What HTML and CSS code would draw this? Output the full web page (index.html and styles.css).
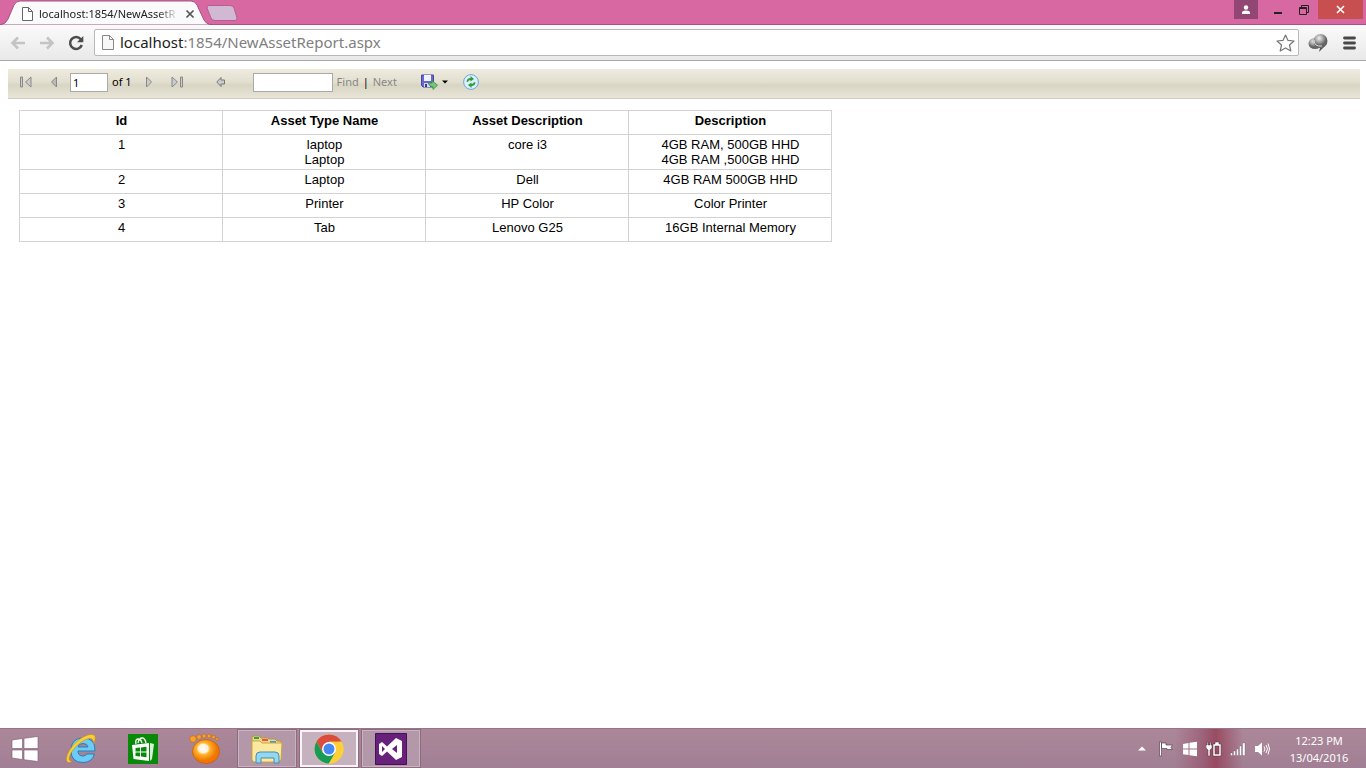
FILE: index.html
```html
<!DOCTYPE html>
<html lang="en">
<head>
<meta charset="utf-8">
<title>localhost:1854/NewAssetReport.aspx</title>
<link rel="stylesheet" href="styles.css">
</head>
<body>
<header class="titlebar">
  <div class="tab">
    <svg class="tab-shape" width="216" height="25" viewBox="0 0 216 25"><path d="M0 25 Q6 24 8 19 L14 5 Q16 1 20 1 H191 Q195 1 197 5 L204 20 Q206 24 211 25Z" fill="#fafafa" stroke="#a75283"/></svg>
    <svg class="tab-page" width="11" height="14" viewBox="0 0 11 14"><path d="M.5.5H6.500L10.500 4.500V13.500H.5ZM6.500.5V4.500H10.500" fill="#fff" stroke="#666"/></svg>
    <span class="tab-title">localhost:1854/NewAssetR</span>
    <button class="plain tab-close" aria-label="Close tab"><svg width="10" height="10" viewBox="0 0 10 10"><path d="M1.500 1.500L8.500 8.500M8.500 1.500L1.500 8.500" stroke="#555" stroke-width="1.700"/></svg></button>
  </div>
  <button class="plain new-tab" aria-label="New tab"><svg width="32" height="16" viewBox="0 0 32 16"><path d="M3 .5H24Q27 .5 28 3L31 13Q31 15.500 29 15.500H9Q6 15.500 5 13L1 3Q1 .5 3 .5Z" fill="#d2b9d3" stroke="#b45f92"/></svg></button>
  <div class="window-controls">
    <button class="plain user" aria-label="User"><svg width="10" height="10" viewBox="0 0 10 10"><circle cx="5" cy="2.500" r="2.200" fill="#fff"/><path d="M1 9V7.500Q1 5.500 5 5.500T9 7.500V9Z" fill="#fff"/></svg></button>
    <button class="plain minimize" aria-label="Minimize"><svg width="8" height="12" viewBox="0 0 8 12"><path d="M0 9H8" stroke="#222" stroke-width="2"/></svg></button>
    <button class="plain restore" aria-label="Restore"><svg width="10" height="10" viewBox="0 0 10 10"><path d="M2.500 2V.5H9.500V7.500H8M.5 2.500H7.500V9.500H.5ZM.5 3.500H7.500" fill="none" stroke="#222"/></svg></button>
    <button class="plain close" aria-label="Close"><svg width="9" height="9" viewBox="0 0 9 9"><path d="M1 1L8 8M8 1L1 8" stroke="#fff" stroke-width="1.600"/></svg></button>
  </div>
</header>

<nav class="browser-bar">
  <button class="plain" aria-label="Back"><svg width="16" height="14" viewBox="0 0 16 14"><path d="M15 7H3M8 1.500L2.500 7L8 12.500" fill="none" stroke="#c4c4c4" stroke-width="2.600"/></svg></button>
  <button class="plain" aria-label="Forward"><svg width="16" height="14" viewBox="0 0 16 14"><path d="M1 7H13M8 1.500L13.500 7L8 12.500" fill="none" stroke="#c4c4c4" stroke-width="2.600"/></svg></button>
  <button class="plain" aria-label="Reload"><svg width="16" height="16" viewBox="0 0 16 16"><path d="M12.800 4.200A6 6 0 1 0 13.800 10" fill="none" stroke="#4c4c4c" stroke-width="2.500"/><path d="M15.300 1V7.300H9Z" fill="#4c4c4c"/></svg></button>
  <div class="address">
    <svg width="12" height="15" viewBox="0 0 12 15"><path d="M.5.5H7.500L11.500 4.500V14.500H.5ZM7.500.5V4.500H11.500" fill="#f8f8f8" stroke="#888"/></svg>
    <span class="url" role="textbox" aria-label="Address"><span class="host">localhost</span>:1854/NewAssetReport.aspx</span>
    <button class="plain" aria-label="Bookmark"><svg width="19" height="18" viewBox="0 0 19 18"><path d="M9.500 1L12 6.400L18 7L13.500 11L14.800 17L9.500 13.900L4.200 17L5.500 11L1 7L7 6.400Z" fill="#fff" stroke="#777" stroke-width="1.200" stroke-linejoin="round"/></svg></button>
  </div>
  <button class="plain extension" aria-label="Extension"><svg width="20" height="19" viewBox="0 0 20 19"><defs><radialGradient id="ball" cx=".4" cy=".3"><stop offset="0" stop-color="#f0f0f0"/><stop offset=".6" stop-color="#a0a0a0"/><stop offset="1" stop-color="#646464"/></radialGradient></defs><ellipse cx="7" cy="10.500" rx="6.500" ry="5.500" fill="url(#ball)"/><path d="M12 15L11 19L17 13Z" fill="#555"/><circle cx="12.500" cy="8" r="7" fill="url(#ball)"/><path d="M6 7Q6 14 14 13" fill="none" stroke="#ddd"/></svg></button>
  <button class="plain" aria-label="Menu"><svg width="13" height="14" viewBox="0 0 13 14"><path d="M1.500 2H11.500M1.500 7H11.500M1.500 12H11.500" stroke="#484848" stroke-width="2.800" stroke-linecap="round"/></svg></button>
</nav>

<main class="page">
  <div class="report-bar" role="toolbar" aria-label="Report">
    <button class="plain first" aria-label="First page"><svg width="12" height="12" viewBox="0 0 12 12"><path d="M.5 1H2.500V11H.5ZM11 1V11L5.500 6Z" fill="#ccc" stroke="#888"/></svg></button>
    <button class="plain previous" aria-label="Previous page"><svg width="8" height="12" viewBox="0 0 8 12"><path d="M6.500 1V11L1.500 6Z" fill="#bbb" stroke="#888"/></svg></button>
    <input class="box page-number" type="text" value="1" aria-label="Current page">
    <span class="page-count">of 1</span>
    <button class="plain next" aria-label="Next page"><svg width="8" height="12" viewBox="0 0 8 12"><path d="M1.500 1V11L6.500 6Z" fill="#ccc" stroke="#888"/></svg></button>
    <button class="plain last" aria-label="Last page"><svg width="12" height="12" viewBox="0 0 12 12"><path d="M1 1V11L6.500 6ZM9.500 1H11.500V11H9.500Z" fill="#ccc" stroke="#888"/></svg></button>
    <button class="plain parent" aria-label="Back to parent report"><svg width="10" height="12" viewBox="0 0 10 12"><path d="M.8 6L5 1.500V4H8.500V8H5V10.500Z" fill="#ccc" stroke="#777"/></svg></button>
    <input class="box search" type="text" aria-label="Find text">
    <a class="find" href="#find">Find</a><span class="bar">|</span><a href="#next">Next</a>
    <button class="plain export" aria-label="Export"><svg width="17" height="16" viewBox="0 0 17 16"><path d="M.5 1H12.500V13H2L.5 11.500Z" fill="#6669c9" stroke="#4449a4"/><path d="M3 1H10V7H3Z" fill="#eef3ff"/><path d="M3 9H9V13H3Z" fill="#d5daf0"/><path d="M4 10H6V13H4Z" fill="#343a96"/><path d="M7 9H11V6.800L16.500 11.200L12 15.500V13Q9 13 7 9Z" fill="#72c977" stroke="#398a45" stroke-width=".8"/></svg><svg width="6" height="4" viewBox="0 0 6 4"><path d="M0 .5H6L3 3.500Z" fill="#000"/></svg></button>
    <button class="plain" aria-label="Refresh"><svg width="16" height="16" viewBox="0 0 16 16"><circle cx="8" cy="8" r="7.400" fill="#dceffb" stroke="#69a8dd"/><path d="M3.500 7.500Q4 4 7.500 4V2L11 5L7.500 7.500V6Q5.500 6 5 8ZM12.500 8.500Q12 12 8.500 12V14L5 11L8.500 8.500V10Q10.500 10 11 8Z" fill="#2d9e3b"/></svg></button>
  </div>
  <table class="report">
    <thead><tr><th>Id</th><th>Asset Type Name</th><th>Asset Description</th><th>Description</th></tr></thead>
    <tbody>
      <tr><td>1</td><td>laptop<br>Laptop</td><td>core i3</td><td>4GB RAM, 500GB HHD<br>4GB RAM ,500GB HHD</td></tr>
      <tr><td>2</td><td>Laptop</td><td>Dell</td><td>4GB RAM 500GB HHD</td></tr>
      <tr><td>3</td><td>Printer</td><td>HP Color</td><td>Color Printer</td></tr>
      <tr><td>4</td><td>Tab</td><td>Lenovo G25</td><td>16GB Internal Memory</td></tr>
    </tbody>
  </table>
</main>

<footer class="taskbar">
  <button class="plain start" aria-label="Start"><svg width="28" height="26" viewBox="0 0 28 26"><path d="M1 4L11.500 2.500V12.500H1ZM13 2.300L27 .5V12.500H13ZM1 14H11.500V23.500L1 22ZM13 14H27V25.500L13 23.700Z" fill="#fff" stroke="#7d5873" stroke-width=".6"/></svg></button>
  <button class="plain task" aria-label="Internet Explorer"><svg width="32" height="32" viewBox="0 0 32 32"><path d="M30 18H13Q13 23 18 23Q20.500 23 22 21H29.500Q27 29.500 18 29.500Q6 29.500 6 17.500Q6 5 18 5Q30.500 5 30 18ZM13 14H23Q22.500 10.500 18 10.500T13 14Z" fill="#6dccf5" fill-rule="evenodd" stroke="#2381bd"/><path d="M7 28.500C-1 33 0 22 8 12.500C16 3 27-1 30 3Q31 6 28.500 11Q29 5 24 5.500C17 7 8 15 5 22Q2.500 28 7 28.500Z" fill="#f9cf38" stroke="#c98d13" stroke-width=".6"/></svg></button>
  <button class="plain task" aria-label="Store"><svg width="30" height="30" viewBox="0 0 30 30"><path fill="#078a08" d="M0 0H30V30H0Z"/><path d="M8 10Q7 5 10 5T14 9M10 9Q11 4 14 4T18 9" fill="none" stroke="#fff" stroke-width="1.300"/><path d="M4 11L21 9V27L5.500 25Z" fill="#fff"/><path d="M22 9L26 10L24 25L22 27Z" fill="#d8efd8"/><path d="M7.500 14L12 13.500V17.500H7.500ZM13 13.400L18.500 12.700V17.500H13ZM7.500 18.500H12V22.500L7.500 22ZM13 18.500H18.500V23.300L13 22.600Z" fill="#078a08"/></svg></button>
  <button class="plain task" aria-label="GOM Player"><svg width="32" height="32" viewBox="0 0 32 32"><defs><radialGradient id="gom" cx=".4" cy=".38"><stop offset="0" stop-color="#fff"/><stop offset=".35" stop-color="#fff1d8"/><stop offset=".5" stop-color="#ffb52e"/><stop offset="1" stop-color="#f17500"/></radialGradient></defs><g fill="#f8a12b" stroke="#b86008" stroke-width=".5"><circle cx="4" cy="6" r="3.300"/><circle cx="10" cy="4" r="2.300"/><circle cx="15" cy="3" r="2"/><circle cx="20" cy="3" r="1.900"/><circle cx="24.500" cy="4" r="1.800"/><circle cx="28" cy="6" r="1.500"/></g><ellipse cx="17" cy="18.500" rx="13.500" ry="12" fill="url(#gom)" stroke="#b86008" stroke-width=".7"/></svg></button>
  <button class="plain task open" aria-label="File Explorer"><svg width="34" height="32" viewBox="0 0 34 32"><path d="M2 5Q2 3 4 3H9L11 5H18L19 6H25L27 8H31V27L28 29H4L2 27Z" fill="#efd783" stroke="#bb953c"/><path d="M4 4H9V6H4Z" fill="#2ca64b"/><path d="M12 6H18V8H12Z" fill="#df5c3c"/><path d="M20 8H26V10H20Z" fill="#4099dd"/><path d="M2 8H10L12 10H32L31 27L28 29H4L2 27Z" fill="#fae99e" stroke="#caa54c"/><path d="M6 30V23Q6 19 10 19H25Q29 19 29 23V30H24V25H11V30Z" fill="#96d7f0" stroke="#418fba"/></svg></button>
  <button class="plain task open active" aria-label="Google Chrome"><svg width="30" height="30" viewBox="0 0 30 30"><circle cx="15" cy="15" r="14.500" fill="#fdd03a"/><path d="M2.400 7.800A14.500 14.500 0 0 1 27.600 7.800H15L8.700 18.600Z" fill="#dc4c3e"/><path d="M2.400 7.800L8.700 18.600H21.300L15 29.500A14.500 14.500 0 0 1 2.400 7.800Z" fill="#179c58"/><path d="M27.600 7.800H15L21.300 18.600L15 29.500A14.500 14.500 0 0 0 27.600 7.800Z" fill="#fdd03a"/><circle cx="15" cy="15" r="7" fill="#fff"/><circle cx="15" cy="15" r="5.500" fill="#4687f4"/></svg></button>
  <button class="plain task open" aria-label="Visual Studio"><svg width="32" height="32" viewBox="0 0 32 32"><path d="M.5.5H31.500V31.500H.5Z" fill="#68217a" stroke="#45105a"/><path d="M21 5L27 8V24L21 27L12 18.500L7 23L4 21V11L7 9L12 13.500ZM22 12L17 16L22 20ZM7 13V19L10 16Z" fill="#fff" fill-rule="evenodd"/></svg></button>
  <div class="tray">
    <button class="plain" aria-label="Show hidden icons"><svg width="8" height="5" viewBox="0 0 8 5"><path d="M0 4.500L4 .5L8 4.500Z" fill="#fff"/></svg></button>
    <svg width="16" height="16" viewBox="0 0 16 16"><path d="M1.500 1H3.500V15H1.500ZM3.500 2H8V4H14.500L13 6.500L14.500 8.500H9V7.500H3.500Z" fill="#fff" stroke="#604051" stroke-width=".7"/></svg>
    <svg width="16" height="16" viewBox="0 0 16 16"><path d="M1 3L6.500 2V7.500H1ZM7.500 1.800L15 .7V7.500H7.500ZM1 8.500H6.500V14L1 13.200ZM7.500 8.500H15V15.300L7.500 14.200Z" fill="#fff"/></svg>
    <svg width="16" height="16" viewBox="0 0 16 16"><path d="M1 1H2V4H4V1H5V4H6V7L4 9V15H2V9L0 7V4H1ZM9 1H13V3H15V15H7V3H9ZM9 5V13H13V5Z" fill="#fff" fill-rule="evenodd" stroke="#503040" stroke-width=".5"/></svg>
    <svg width="16" height="16" viewBox="0 0 16 16"><path d="M.5 12H2.500V14.500H.5ZM3.500 10H5.500V14.500H3.500ZM6.500 8H8.500V14.500H6.500ZM9.500 5H11.500V14.500H9.500ZM12.500 2H15V14.500H12.500Z" fill="#fff" stroke="#604051" stroke-width=".3"/></svg>
    <svg width="16" height="16" viewBox="0 0 16 16"><path d="M1 5H4L8 1.500V14.500L4 11H1Z" fill="#fff"/><path d="M10 5.500Q12 8 10 10.500M12 4Q15 8 12 12M14 2.500Q17 8 14 13.500" fill="none" stroke="#fff"/></svg>
  </div>
  <div class="clock"><time>12:23 PM</time><time>13/04/2016</time></div>
</footer>
</body>
</html>
```
FILE: styles.css
```css
* { box-sizing: border-box; }
body {
  margin: 0;
  min-height: 100vh;
  display: flex;
  flex-direction: column;
  background: #fff;
  color: #000;
  font-family: "Liberation Sans", Arial, sans-serif;
}
svg { display: block; flex: none; }
.plain {
  display: flex;
  align-items: center;
  justify-content: center;
  padding: 0;
  border: 0;
  background: transparent;
}

.titlebar {
  display: flex;
  align-items: flex-start;
  height: 25px;
  background: #d768a2;
  border-bottom: 1px solid #a75283;
}
.tab {
  position: relative;
  display: flex;
  align-items: center;
  width: 206px;
  height: 25px;
  padding: 2px 0 0 22px;
}
.tab-shape { position: absolute; left: 0; top: 0; }
.tab-page, .tab-title, .tab-close { position: relative; }
.tab-title {
  width: 140px;
  margin: 0 6px;
  white-space: nowrap;
  font: 11px/16px "Noto Sans", sans-serif;
  color: #222;
  -webkit-mask-image: linear-gradient(to right, #000 118px, transparent);
  mask-image: linear-gradient(to right, #000 118px, transparent);
}
.new-tab { margin-top: 5px; }
.window-controls { display: flex; margin: 0 3px 0 auto; }
.window-controls .plain { height: 19px; }
.window-controls .user { background: #924674; }
.user { width: 24px; }
.minimize { width: 40px; }
.restore { width: 12px; margin-right: 8px; }
.window-controls .close { width: 45px; background: #c84f50; }

.browser-bar {
  display: flex;
  align-items: center;
  gap: 13px;
  height: 36px;
  padding: 0 10px;
  background: linear-gradient(#fafafa, #e9e9e9);
  border-bottom: 1px solid #a9a9a9;
}
.address {
  flex: 1;
  display: flex;
  align-items: center;
  gap: 6px;
  height: 27px;
  margin: 0 -4px 0 -3px;
  padding: 0 3px 0 7px;
  background: #fff;
  border: 1px solid #b8b8b8;
  border-radius: 2px;
}
.extension { margin-right: 2px; }
.url {
  flex: 1;
  padding-bottom: 2px;
  font: 15px/22px "Noto Sans", sans-serif;
  color: #808080;
}
.host { color: #222; }

.page { flex: 1; padding: 8px 6px 8px 8px; }
.report-bar {
  display: flex;
  align-items: center;
  height: 30px;
  padding: 0 12px 3px;
  background: linear-gradient(#eeebdf, #e3dfcf 45%, #d9d5c4 55%, #e8e5d8);
  border-bottom: 1px solid #cfccc3;
  font: 11px/16px "Noto Sans", sans-serif;
}
.box {
  height: 19px;
  padding: 1px 2px;
  border: 1px solid #aaa;
  background: #fff;
  font: inherit;
}
.previous { margin-left: 18px; }
.page-number { width: 38px; margin-left: 12px; }
.page-count { margin-left: 4px; }
.next { margin-left: 13px; }
.last { margin-left: 18px; }
.parent { margin-left: 33px; }
.search { width: 80px; margin-left: 27px; }
.report-bar a { color: #888; text-decoration: none; }
.find { margin-left: 4px; }
.bar { width: 14px; text-align: center; }
.export { gap: 4px; margin: 0 15px 0 24px; }

.report {
  width: 813px;
  margin: 11px 0 0 11px;
  border-collapse: collapse;
  table-layout: fixed;
  font-size: 13px;
  line-height: 15px;
}
.report th, .report td {
  height: 24px;
  padding: 2px 2px 2px 3px;
  border: 1px solid #d3d3d3;
  text-align: center;
  vertical-align: top;
}

.taskbar {
  display: flex;
  align-items: center;
  gap: 2px;
  height: 40px;
  border-top: 1px solid #94758a;
  background:
    linear-gradient(90deg, transparent 86%, #9348638c 88%, #933850c0 89%, transparent 91%),
    linear-gradient(#ac8799, #a17f94);
}
.start { width: 49px; height: 39px; }
.task { width: 60px; height: 39px; border: 1px solid transparent; }
.open { background: #b398a9; border-color: #8d6c80; outline: 1px solid #c8b3bf; outline-offset: -2px; }
.active { background: #c6b2be; outline: 2px solid #f8f3f6; outline-offset: -3px; }
.tray { display: flex; align-items: center; gap: 8px; margin-left: auto; }
.tray .plain { margin-right: 4px; }
.clock {
  display: flex;
  flex-direction: column;
  align-items: center;
  width: 94px;
  color: #fff;
  font: 11px/17px "Noto Sans", sans-serif;
}
```
